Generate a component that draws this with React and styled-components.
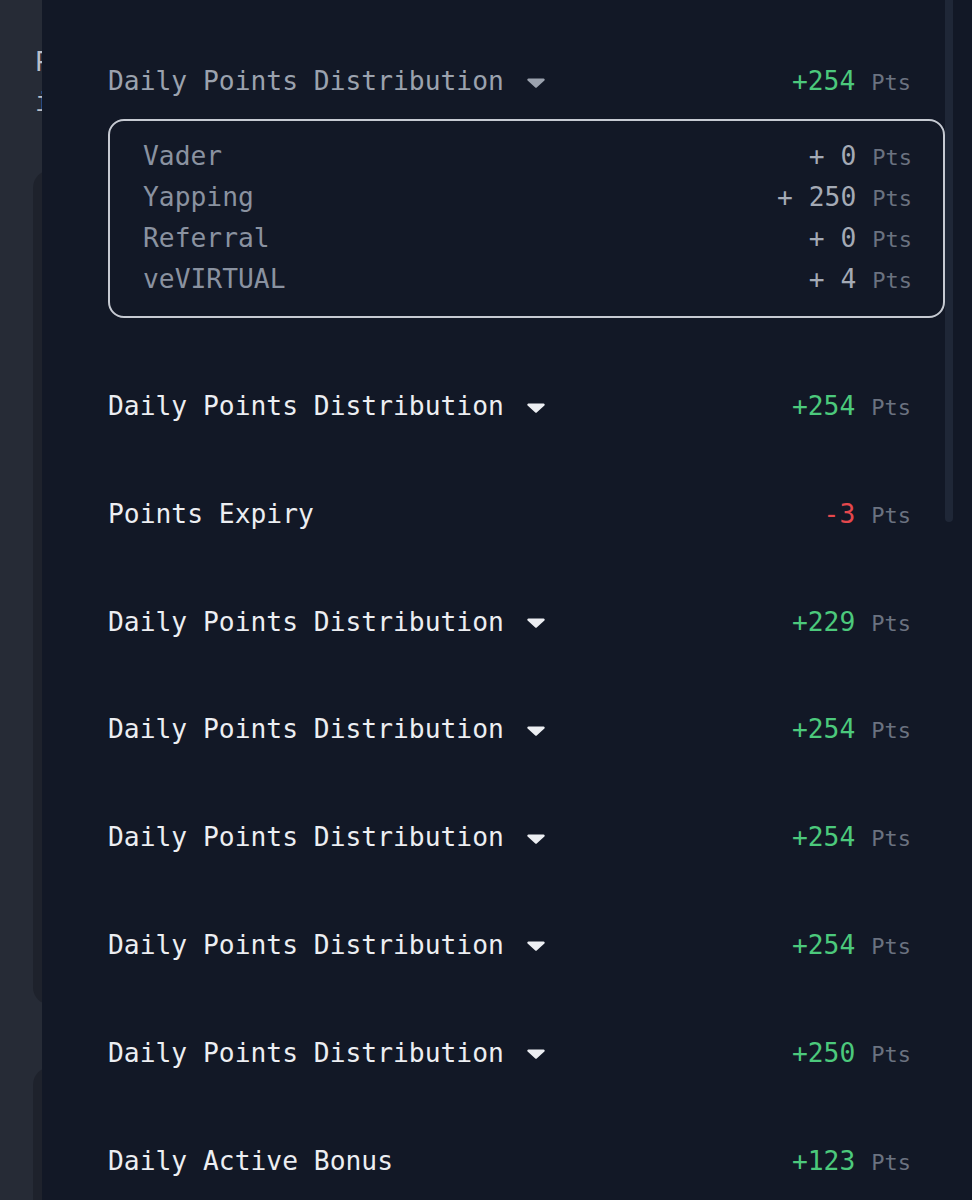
import styled, { createGlobalStyle } from 'styled-components';

const GlobalStyle = createGlobalStyle`
  html, body {
    margin: 0;
    padding: 0;
    background: #262b36;
  }
  * { box-sizing: border-box; }
`;

const mono = `"DejaVu Sans Mono", "Liberation Mono", monospace`;

const Page = styled.div`
  display: flex;
  width: 972px;
  height: 1200px;
  overflow: hidden;
  background: #262b36;
  font-family: ${mono};
`;

// the page that sits behind the drawer, mostly hidden
const Behind = styled.div`
  flex: 0 0 42px;
  overflow: hidden;
  padding-left: 33px;
  padding-top: 42px;
`;

const BehindText = styled.div`
  white-space: nowrap;
  color: #b9bec8;
  font-size: 26px;
  line-height: 40px;
  padding-left: 2px;
`;

const BehindCard = styled.div`
  width: 400px;
  height: ${(p) => p.$h}px;
  margin-top: ${(p) => p.$top}px;
  background: #1e222c;
  border-radius: 18px;
`;

const Drawer = styled.div`
  flex: 1;
  display: flex;
  background: #121826;
  padding-left: 33px;
  padding-right: 19px;
`;

const Main = styled.div`
  flex: 1;
  display: flex;
  flex-direction: column;
`;

const Divider = styled.div`
  margin-top: 16px;
  height: 2px;
  background: #202838;
`;

const List = styled.div`
  padding: 11px 0 0 33px;
`;

const Item = styled.div`
  padding: 36px 0 ${(p) => (p.$open ? 37 : 36)}px;
  height: ${(p) => (p.$open ? 'auto' : '107.8px')};
`;

const Row = styled.div`
  display: flex;
  align-items: center;
  justify-content: space-between;
  height: 36px;
  padding-right: 34px;
`;

const Title = styled.div`
  display: flex;
  align-items: center;
  font-size: 26.3px;
  color: ${(p) => (p.$muted ? '#9ba2ae' : '#eceef2')};
  white-space: nowrap;
`;

const Caret = styled.svg`
  margin-left: 23px;
  margin-top: 3px;
`;

const Amount = styled.div`
  display: flex;
  align-items: baseline;
  gap: 16px;
  white-space: nowrap;
`;

const Value = styled.span`
  font-size: 26.3px;
  color: ${(p) => (p.$neg ? '#e5484d' : '#4cc97c')};
`;

const Unit = styled.span`
  font-size: 22px;
  color: #6b7280;
`;

const Breakdown = styled.div`
  margin: 20px 0 -3px;
  border: 2px solid #c6cad2;
  border-radius: 16px;
  padding: 15px 31px 16px 33px;
`;

const SubRow = styled.div`
  display: flex;
  justify-content: space-between;
  align-items: baseline;
  height: 41px;
  line-height: 41px;
`;

const SubName = styled.span`
  font-size: 26.3px;
  color: #8a92a0;
`;

const SubValue = styled.span`
  font-size: 26.3px;
  color: #a4aab5;
`;

const ScrollTrack = styled.div`
  flex: 0 0 8px;
`;

const ScrollThumb = styled.div`
  height: 522px;
  background: #1f2737;
  border-radius: 0 0 4px 4px;
`;

const history = [
  {
    title: 'Daily Points Distribution',
    value: '+254',
    open: true,
    breakdown: [
      ['Vader', '0'],
      ['Yapping', '250'],
      ['Referral', '0'],
      ['veVIRTUAL', '4'],
    ],
  },
  { title: 'Daily Points Distribution', value: '+254', caret: true },
  { title: 'Points Expiry', value: '-3', neg: true },
  { title: 'Daily Points Distribution', value: '+229', caret: true },
  { title: 'Daily Points Distribution', value: '+254', caret: true },
  { title: 'Daily Points Distribution', value: '+254', caret: true },
  { title: 'Daily Points Distribution', value: '+254', caret: true },
  { title: 'Daily Points Distribution', value: '+250', caret: true },
  { title: 'Daily Active Bonus', value: '+123' },
];

const CaretIcon = ({ color }) => (
  <Caret width="18" height="10" viewBox="0 0 18 10">
    <path d="M1.5 0.5h15a1.2 1.2 0 0 1 0.9 2L10 9.3a1.4 1.4 0 0 1-2 0L0.6 2.5a1.2 1.2 0 0 1 0.9-2z" fill={color} />
  </Caret>
);

const App = () => {
  return (
    <>
      <GlobalStyle />
      <Page>
        <Behind>
          <BehindText>P</BehindText>
          <BehindText>i</BehindText>
          <BehindCard $top={48} $h={835} />
          <BehindCard $top={62} $h={400} />
        </Behind>
        <Drawer>
          <Main>
            <Divider />
            <List>
              {history.map((item, i) => (
                <Item key={i} $open={item.open}>
                  <Row>
                    <Title $muted={item.open}>
                      {item.title}
                      {(item.open || item.caret) && (
                        <CaretIcon color={item.open ? '#9ba2ae' : '#eceef2'} />
                      )}
                    </Title>
                    <Amount>
                      <Value $neg={item.neg}>{item.value}</Value>
                      <Unit>Pts</Unit>
                    </Amount>
                  </Row>
                  {item.open && (
                    <Breakdown>
                      {item.breakdown.map(([name, pts]) => (
                        <SubRow key={name}>
                          <SubName>{name}</SubName>
                          <Amount>
                            <SubValue>+ {pts}</SubValue>
                            <Unit>Pts</Unit>
                          </Amount>
                        </SubRow>
                      ))}
                    </Breakdown>
                  )}
                </Item>
              ))}
            </List>
          </Main>
          <ScrollTrack>
            <ScrollThumb />
          </ScrollTrack>
        </Drawer>
      </Page>
    </>
  );
};

export default App;
